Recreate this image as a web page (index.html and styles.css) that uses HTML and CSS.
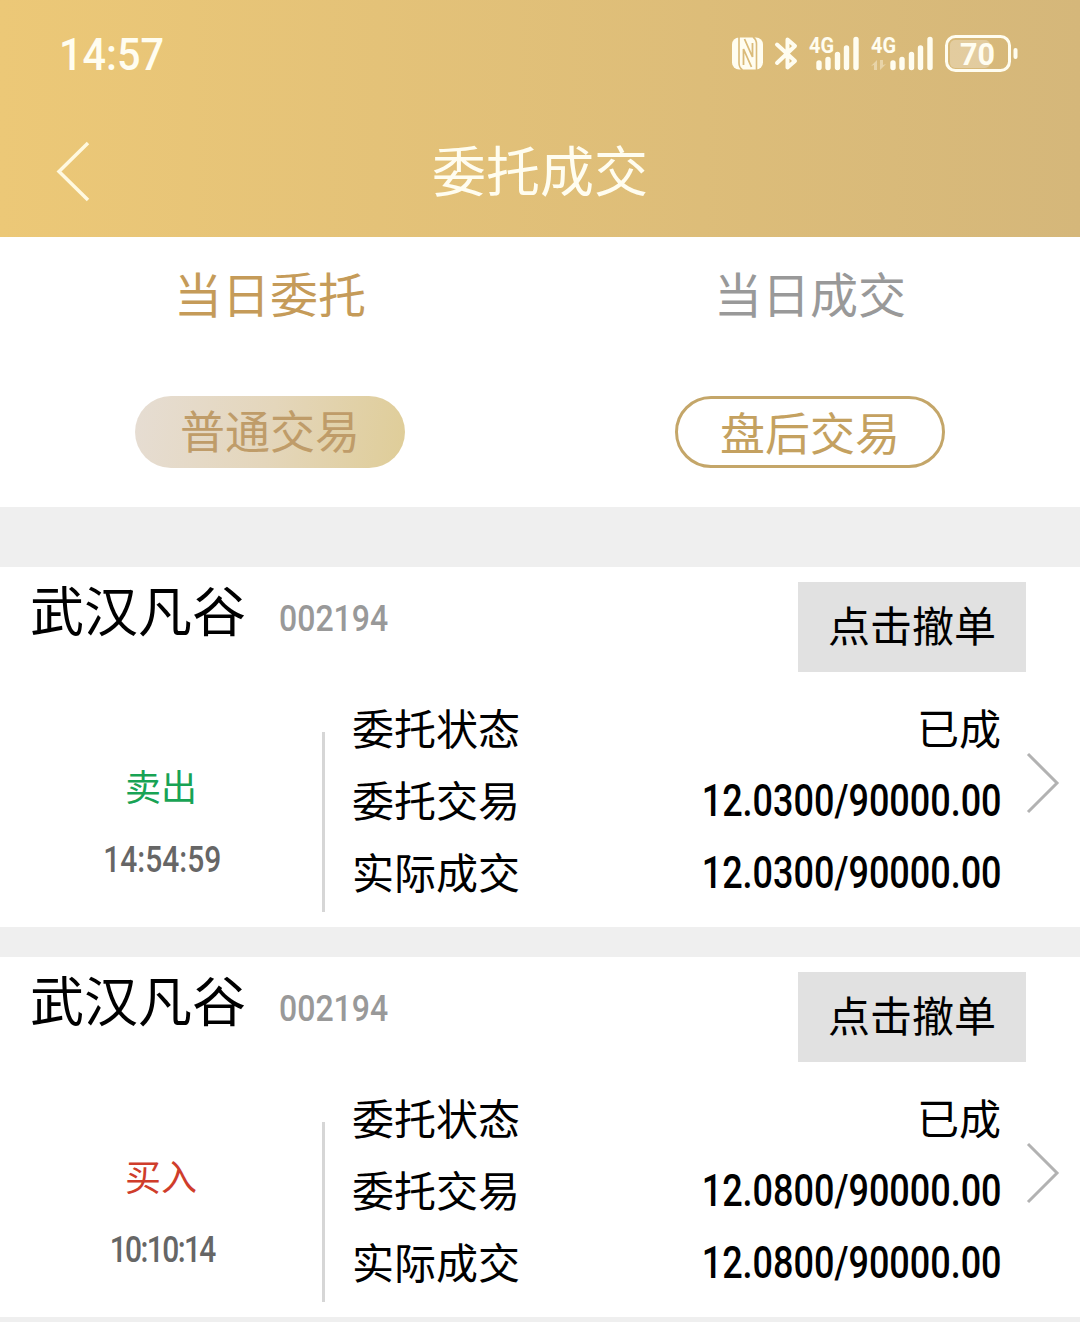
FILE: index.html
```
<!DOCTYPE html>
<html lang="zh-CN">
<head>
    <meta charset="UTF-8">
    <meta name="viewport" content="width=device-width, initial-scale=1.0">
    <title>委托成交</title>
    <link rel="stylesheet" href="styles.css">
</head>
<body>

<header class="header">
    <div class="status-bar">
        <span class="clock">14:57</span>
        <svg class="status-icons" width="300" height="60" viewBox="725 24 300 60">
            <!-- nfc -->
            <rect x="732" y="37.500" width="31" height="32" rx="7" fill="#fffdf0"/>
            <path d="M739 37v26q0 4.500 3.500 7M756.500 70V44q0-4.500-3.500-7" fill="none" stroke="#dabb7a" stroke-width="1.600"/>
            <path d="M743.500 65V49l8 18M744.500 39l8 18V43" fill="none" stroke="#dabb7a" stroke-width="1.800"/>
            <!-- bluetooth -->
            <path d="M777 44.500l18 16.500-7.500 6.500V39.500l7.500 6.500-18 17" fill="none" stroke="#fffdf0" stroke-width="4" stroke-linecap="round" stroke-linejoin="round"/>
            <!-- signal -->
            <text x="809" y="53" class="net" textLength="25" lengthAdjust="spacingAndGlyphs">4G</text>
            <path d="M819 63v4.500M828 59.500v8M837.500 54.500v13M846.500 48v19.500M856 39.500v28" class="bars"/>
            <text x="871" y="53" class="net" textLength="25" lengthAdjust="spacingAndGlyphs">4G</text>
            <path d="M893 63v4.500M902 59.500v8M911.500 54.500v13M920.500 48v19.500M930 39.500v28" class="bars"/>
            <path d="M871 66l6-6v10h-3v-5zM886 64l-6 6V60h3v5z" fill="#fffdf0" fill-opacity="0.4"/>
            <!-- battery -->
            <rect x="950" y="40" width="40" height="28" rx="5" fill="#fff" fill-opacity="0.28"/>
            <rect x="946.500" y="36.500" width="63" height="34" rx="9" fill="none" stroke="#fffdf0" stroke-width="3"/>
            <path d="M1015.500 50v7" stroke="#fffdf0" stroke-width="4" stroke-linecap="round"/>
            <text x="960" y="65" class="battery-text" textLength="35" lengthAdjust="spacingAndGlyphs">70</text>
        </svg>
    </div>
    <div class="nav">
        <svg class="back" width="36" height="62" viewBox="0 0 36 62">
            <path d="M34 3L5 31.500 34 60" fill="none" stroke="#fff9e0" stroke-width="3.500"/>
        </svg>
        <h1 class="title">委托成交</h1>
    </div>
</header>

<div class="tabs">
    <div class="tab active">当日委托</div>
    <div class="tab">当日成交</div>
</div>

<div class="filters">
    <button class="pill active">普通交易</button>
    <button class="pill">盘后交易</button>
</div>

<main class="orders">
    <section class="order">
        <div class="order-head">
            <span class="name">武汉凡谷</span>
            <span class="code">002194</span>
            <button class="cancel">点击撤单</button>
        </div>
        <div class="order-body">
            <div class="side">
                <div class="sell">卖出</div>
                <div class="time">14:54:59</div>
            </div>
            <div class="details">
                <div class="row"><span>委托状态</span><span>已成</span></div>
                <div class="row"><span>委托交易</span><span class="value">12.0300/90000.00</span></div>
                <div class="row"><span>实际成交</span><span class="value">12.0300/90000.00</span></div>
            </div>
            <svg class="arrow" width="36" height="62" viewBox="0 0 36 62">
                <path d="M2 2l29 29L2 60" fill="none" stroke="#b2b2b2" stroke-width="3"/>
            </svg>
        </div>
    </section>

    <section class="order">
        <div class="order-head">
            <span class="name">武汉凡谷</span>
            <span class="code">002194</span>
            <button class="cancel">点击撤单</button>
        </div>
        <div class="order-body">
            <div class="side">
                <div class="buy">买入</div>
                <div class="time tight">10:10:14</div>
            </div>
            <div class="details">
                <div class="row"><span>委托状态</span><span>已成</span></div>
                <div class="row"><span>委托交易</span><span class="value">12.0800/90000.00</span></div>
                <div class="row"><span>实际成交</span><span class="value">12.0800/90000.00</span></div>
            </div>
            <svg class="arrow" width="36" height="62" viewBox="0 0 36 62">
                <path d="M2 2l29 29L2 60" fill="none" stroke="#b2b2b2" stroke-width="3"/>
            </svg>
        </div>
    </section>
</main>

</body>
</html>
```
FILE: styles.css
```
* {
    box-sizing: border-box;
}
body {
    margin: 0;
    width: 1080px;
    height: 1322px;
    overflow: hidden;
    background-color: #efefef;
    color: #000;
    font-family: "Noto Sans CJK SC", sans-serif;
}
button {
    font-family: inherit;
    padding: 0;
    border: none;
}
.header {
    height: 237px;
    background: linear-gradient(to right, #ecc877, #d5b77a);
    color: #fffdf0;
}
.status-bar {
    display: flex;
    justify-content: space-between;
    height: 105px;
    padding: 24px 55px 0 59px;
}
.clock {
    font-family: Roboto, sans-serif;
    font-size: 45px;
    font-weight: 500;
    line-height: 62px;
    transform: scaleX(0.92);
    transform-origin: left;
}
.net {
    font-family: Roboto, sans-serif;
    font-size: 22px;
    font-weight: 700;
    fill: #fffdf0;
}
.bars {
    fill: none;
    stroke: #fffdf0;
    stroke-width: 5.4;
    stroke-linecap: round;
}
.battery-text {
    font-family: Roboto, sans-serif;
    font-size: 32px;
    font-weight: 700;
    fill: #fffdf0;
}
.nav {
    display: grid;
    grid-template-columns: 90px 1fr 90px;
    align-items: center;
    height: 132px;
}
.back {
    margin-left: 54px;
}
.title {
    margin: 0;
    padding-bottom: 4px;
    font-size: 54px;
    font-weight: 400;
    line-height: 128px;
    text-align: center;
}
.tabs {
    display: grid;
    grid-template-columns: 1fr 1fr;
    height: 120px;
    background-color: #fff;
}
.tab {
    font-size: 48px;
    line-height: 111px;
    text-align: center;
    color: #999;
}
.tab.active {
    color: #c59b59;
}
.filters {
    display: grid;
    grid-template-columns: 1fr 1fr;
    justify-items: center;
    height: 150px;
    padding-top: 39px;
    background-color: #fff;
}
.pill {
    width: 270px;
    height: 72px;
    padding-bottom: 1px;
    border: 3px solid #c4a669;
    border-radius: 36px;
    background-color: #fff;
    color: #c4a160;
    font-size: 45px;
    line-height: 65px;
}
.pill.active {
    padding-bottom: 6px;
    border: none;
    background: linear-gradient(100deg, #e6ddd3, #e4d6bb 50%, #dfcd98);
    color: #bf9c69;
}
.orders {
    display: grid;
    gap: 30px;
    margin-top: 60px;
}
.order {
    height: 360px;
    background-color: #fff;
}
.order-head {
    display: flex;
    align-items: flex-start;
    height: 120px;
    padding: 15px 54px 0 30px;
}
.name {
    font-size: 54px;
    line-height: 54px;
}
.code {
    margin-left: 33px;
    padding-top: 7px;
    font-family: Roboto, sans-serif;
    font-size: 37px;
    font-weight: 500;
    line-height: 60px;
    color: #999;
    transform: scaleX(0.865);
    transform-origin: left;
}
.cancel {
    width: 228px;
    height: 90px;
    padding-bottom: 6px;
    margin-left: auto;
    background-color: #e1e1e1;
    color: #000;
    font-size: 42px;
    line-height: 84px;
}
.order-body {
    display: flex;
    height: 240px;
}
.side {
    width: 325px;
    height: 180px;
    margin-top: 45px;
    padding-top: 17px;
    border-right: 3px solid #d6d6d6;
    font-size: 36px;
    line-height: 72px;
    text-align: center;
}
.sell {
    color: #18a354;
}
.buy {
    color: #cf3d2b;
}
.time {
    padding: 3px 0 0 3px;
    font-family: Roboto, sans-serif;
    font-size: 37px;
    font-weight: 500;
    color: #666;
    transform: scaleX(0.81);
}
.time.tight {
    letter-spacing: -2px;
}
.details {
    width: 649px;
    margin-left: 27px;
    padding-top: 4px;
}
.row {
    display: flex;
    justify-content: space-between;
    height: 72px;
    font-size: 42px;
    line-height: 72px;
}
.value {
    margin-right: -1px;
    padding-top: 3px;
    font-family: Roboto, sans-serif;
    font-size: 43.5px;
    font-weight: 500;
    transform: scaleX(0.827);
    transform-origin: right;
}
.arrow {
    margin: 65px 0 0 25px;
}
```
